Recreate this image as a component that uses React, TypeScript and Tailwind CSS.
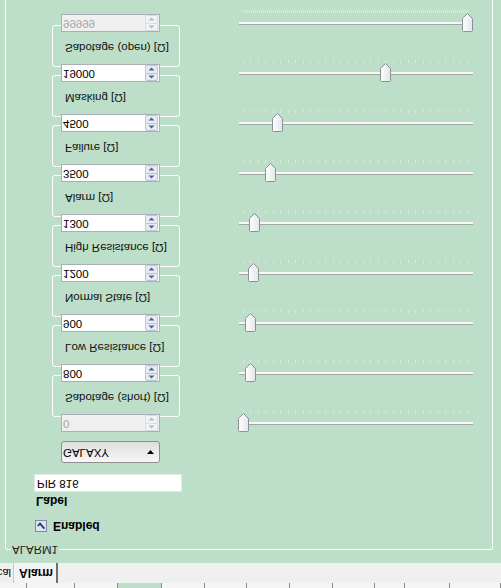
import React from "react";

const FONT = "font-['Liberation_Sans',Arial,sans-serif]";

type Row = { v: string; disabled?: boolean; pos: number; dense?: boolean; label?: string };

const rows: Row[] = [
  { v: "0", disabled: true, pos: 4, label: "Sabotage (short) [Ω]" },
  { v: "800", pos: 11, label: "Low Resistance [Ω]" },
  { v: "900", pos: 11, label: "Normal State [Ω]" },
  { v: "1200", pos: 14, label: "High Resistance [Ω]" },
  { v: "1300", pos: 15, label: "Alarm [Ω]" },
  { v: "3500", pos: 31, label: "Failure [Ω]" },
  { v: "4500", pos: 38, label: "Masking [Ω]" },
  { v: "19000", pos: 146, label: "Sabotage (open) [Ω]" },
  { v: "99999", disabled: true, pos: 228, dense: true },
];

function Arrow({ up, color }: { up: boolean; color: string }) {
  return (
    <svg width="7" height="4" viewBox="0 0 7 4">
      {up ? <path d="M0.5 3.5 L3.5 0.5 L6.5 3.5 Z" fill={color} /> : <path d="M0.5 0.5 L3.5 3.5 L6.5 0.5 Z" fill={color} />}
    </svg>
  );
}

function Spin({ value, disabled }: { value: string; disabled?: boolean }) {
  const ac = disabled ? "#b4b9c4" : "#4d6185";
  return (
    <div
      className={`relative z-10 ml-[9px] flex h-[18px] w-[99px] items-center border border-[#a9afb6] ${
        disabled ? "bg-[#f0f0f0] text-[#a3a3a3]" : "bg-white text-black"
      }`}
    >
      <span className="flex-1 pl-[1px] text-[11.5px] leading-none">{value}</span>
      <div className="mr-[1px] flex h-[16px] w-[13px] flex-col">
        <div
          className={`flex h-[8px] items-center justify-center rounded-t-[2px] border ${
            disabled ? "border-[#d8dbe0] bg-[#f2f3f5]" : "border-[#bcc5d6] bg-[#e6ebf4]"
          }`}
        >
          <Arrow up color={ac} />
        </div>
        <div
          className={`flex h-[8px] items-center justify-center rounded-b-[2px] border border-t-0 ${
            disabled ? "border-[#d8dbe0] bg-[#f2f3f5]" : "border-[#bcc5d6] bg-[#e6ebf4]"
          }`}
        >
          <Arrow up={false} color={ac} />
        </div>
      </div>
    </div>
  );
}

function Thumb() {
  return (
    <svg width="11" height="19" viewBox="0 0 11 19">
      <defs>
        <linearGradient id="tg" x1="0" y1="0" x2="1" y2="0">
          <stop offset="0" stopColor="#ffffff" />
          <stop offset="1" stopColor="#e3e5ea" />
        </linearGradient>
      </defs>
      <path
        d="M1.5 0.5 H9.5 Q10.5 0.5 10.5 1.5 V13.5 L5.5 18.5 L0.5 13.5 V1.5 Q0.5 0.5 1.5 0.5 Z"
        fill="url(#tg)"
        stroke="#8b9096"
        strokeWidth="1"
      />
    </svg>
  );
}

function Slider({ pos, dense }: { pos: number; dense?: boolean }) {
  return (
    <div className="relative h-[50px] w-[234px]">
      <div className="mt-[23px] h-[3px] w-[234px] border-t border-[#a0a8a3] bg-[#f6faf7]" />
      <div
        className={`ml-[4px] mt-[9px] h-[3px] w-[226px] ${
          dense
            ? "bg-[repeating-linear-gradient(90deg,#d6ebde_0_1px,transparent_1px_2px)]"
            : "bg-[repeating-linear-gradient(90deg,#d6ebde_0_1px,transparent_1px_7.5px)]"
        }`}
      />
      <div className="absolute top-[16px]" style={{ left: pos - 5 }}>
        <Thumb />
      </div>
    </div>
  );
}

export default function App() {
  const topCells = [27, 48, 43, 44, 43, 42, 43, 43, 42, 30, 45, 51];
  return (
    <div className={`${FONT} h-[588px] w-[501px] overflow-hidden [transform:scaleY(-1)]`}>
      {/* upper clipped tab row */}
      <div className="flex h-[5px] bg-[#f5f5f5]">
        {topCells.map((w, i) => (
          <div
            key={i}
            className={`h-full border-r border-[#8a8a8a] ${i === 3 ? "bg-[#bddfca]" : ""}`}
            style={{ width: w }}
          />
        ))}
      </div>
      {/* tab bar */}
      <div className="flex h-[20px] items-center bg-[#f0f0f0] text-[11px]">
        <div className="flex h-full w-[14px] items-center justify-end overflow-hidden border-r border-[#c8c8c8]">
          <span className="whitespace-nowrap pr-[2px]">cal</span>
        </div>
        <div className="flex h-full w-[44px] items-center border-r-2 border-[#6f6f6f] bg-[#f4f4f4] pl-[5px] text-[12px] font-bold">
          Alarm
        </div>
        <div className="flex-1" />
      </div>
      {/* green panel */}
      <div className="h-[563px] bg-[#bddfca] pt-[13px]">
        <div className="relative ml-[5px] h-[600px] w-[488px] rounded-[2px] border border-white">
          <div className="absolute left-[5px] top-[-8px] bg-[#bddfca] px-[1px] text-[11.5px] leading-[14px] text-[#222]">
            ALARM1
          </div>
          <div className="ml-[29px] mt-[17px] flex h-[12px] items-center">
            <div className="flex h-[12px] w-[12px] items-center justify-center border border-[#7d8aa3] bg-[#dde4ef]">
              <svg width="10" height="10" viewBox="0 0 10 10">
                <path d="M1.8 5 L4 7.4 L8.4 2.4" fill="none" stroke="#21355c" strokeWidth="1.7" />
              </svg>
            </div>
            <span className="ml-[6px] text-[12px] font-bold leading-none">Enabled</span>
          </div>
          <div className="ml-[30px] mt-[12px] h-[14px] text-[12px] font-bold leading-[14px]">Label</div>
          <div className="ml-[28px] mt-[2px] flex h-[18px] w-[148px] items-center border border-[#e4e8e6] bg-white pl-[2px] text-[11.5px]">
            PIR 816
          </div>
          <div className="mt-[11px] flex">
            {/* left column */}
            <div className="ml-[46px] flex w-[128px] flex-col">
              <div className="ml-[9px] flex h-[22px] w-[99px] items-center rounded-[3px] border border-[#8e8f8f] bg-gradient-to-b from-[#f7f7f7] to-[#dedede] pl-[1px] text-[11.5px]">
                <span className="flex-1">GALAXY</span>
                <svg width="7" height="4" viewBox="0 0 7 4" className="mr-[5px]">
                  <path d="M0 0 L7 0 L3.5 4 Z" fill="#000" />
                </svg>
              </div>
              <div className="mt-[9px]">
                <Spin value={rows[0].v} disabled={rows[0].disabled} />
              </div>
              {rows.slice(1).map((r, i) => (
                <React.Fragment key={r.v}>
                  <div className="-mt-[3px] h-[42px] w-[128px] rounded-[3px] border border-white pl-[12px] pt-[11px] text-[11.5px] leading-[14px] text-[#111]">
                    {rows[i].label}
                  </div>
                  <div className="-mt-[7px]">
                    <Spin value={r.v} disabled={r.disabled} />
                  </div>
                </React.Fragment>
              ))}
            </div>
            {/* right column */}
            <div className="ml-[59px] mt-[15px] flex flex-col">
              {rows.map((r) => (
                <Slider key={r.v} pos={r.pos} dense={r.dense} />
              ))}
            </div>
          </div>
        </div>
      </div>
    </div>
  );
}
